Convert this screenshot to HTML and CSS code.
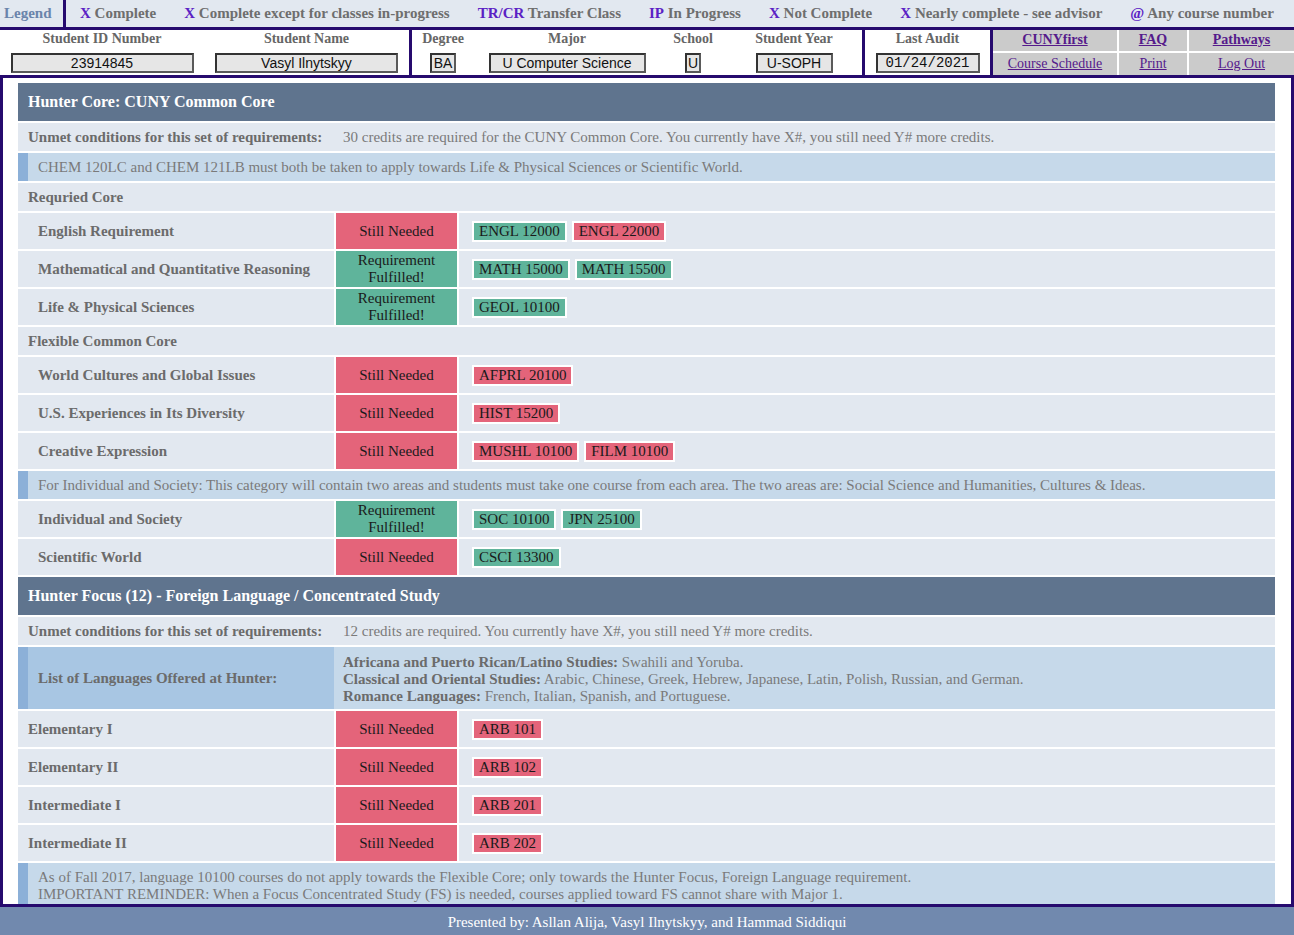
FILE: index.html
```html
<!DOCTYPE html>
<html lang="en">
<head>
<meta charset="utf-8">
<title>Degree Audit</title>
<link rel="stylesheet" href="styles.css">
</head>
<body>
<div class="legend">
  <div class="legend-title">Legend</div>
  <div class="legend-items">
    <span><b class="k">X</b> Complete</span>
    <span><b class="k">X</b> Complete except for classes in-progress</span>
    <span><b class="k">TR/CR</b> Transfer Class</span>
    <span><b class="k">IP</b> In Progress</span>
    <span><b class="k">X</b> Not Complete</span>
    <span><b class="k">X</b> Nearly complete - see advisor</span>
    <span><b class="k">@</b> Any course number</span>
  </div>
</div>

<div class="hdr">
  <div class="sec sec1">
    <div class="field f-id"><div class="lbl">Student ID Number</div><div class="box w-id">23914845</div></div>
    <div class="field f-name"><div class="lbl">Student Name</div><div class="box w-id">Vasyl Ilnytskyy</div></div>
  </div>
  <div class="sec sec2">
    <div class="field f-deg"><div class="lbl">Degree</div><div class="box w-deg">BA</div></div>
    <div class="field f-maj"><div class="lbl">Major</div><div class="box w-maj">U Computer Science</div></div>
    <div class="field f-sch"><div class="lbl">School</div><div class="box w-sch">U</div></div>
    <div class="field f-yr"><div class="lbl">Student Year</div><div class="box w-yr">U-SOPH</div></div>
  </div>
  <div class="sec sec3">
    <div class="field f-aud"><div class="lbl">Last Audit</div><div class="box mono w-aud">01/24/2021</div></div>
  </div>
  <div class="links">
    <a href="#" class="strong">CUNYfirst</a>
    <a href="#" class="strong">FAQ</a>
    <a href="#" class="strong">Pathways</a>
    <a href="#">Course Schedule</a>
    <a href="#">Print</a>
    <a href="#">Log Out</a>
  </div>
</div>

<main class="main">
  <div class="tbl">
    <div class="sechead">Hunter Core: CUNY Common Core</div>
    <div class="unmet"><div class="ulbl">Unmet conditions for this set of requirements:</div><div class="uval">30 credits are required for the CUNY Common Core. You currently have X#, you still need Y# more credits.</div></div>
    <div class="note">CHEM 120LC and CHEM 121LB must both be taken to apply towards Life &amp; Physical Sciences or Scientific World.</div>
    <div class="sub">Requried Core</div>
    <div class="req"><div class="rl ind">English Requirement</div><div class="st bad">Still Needed</div><div class="cs"><span class="c ok">ENGL 12000</span><span class="c bad">ENGL 22000</span></div></div>
    <div class="req"><div class="rl ind">Mathematical and Quantitative Reasoning</div><div class="st ok">Requirement<br>Fulfilled!</div><div class="cs"><span class="c ok">MATH 15000</span><span class="c ok">MATH 15500</span></div></div>
    <div class="req"><div class="rl ind">Life &amp; Physical Sciences</div><div class="st ok">Requirement<br>Fulfilled!</div><div class="cs"><span class="c ok">GEOL 10100</span></div></div>
    <div class="sub">Flexible Common Core</div>
    <div class="req"><div class="rl ind">World Cultures and Global Issues</div><div class="st bad">Still Needed</div><div class="cs"><span class="c bad">AFPRL 20100</span></div></div>
    <div class="req"><div class="rl ind">U.S. Experiences in Its Diversity</div><div class="st bad">Still Needed</div><div class="cs"><span class="c bad">HIST 15200</span></div></div>
    <div class="req"><div class="rl ind">Creative Expression</div><div class="st bad">Still Needed</div><div class="cs"><span class="c bad">MUSHL 10100</span><span class="c bad">FILM 10100</span></div></div>
    <div class="note">For Individual and Society: This category will contain two areas and students must take one course from each area. The two areas are: Social Science and Humanities, Cultures &amp; Ideas.</div>
    <div class="req"><div class="rl ind">Individual and Society</div><div class="st ok">Requirement<br>Fulfilled!</div><div class="cs"><span class="c ok">SOC 10100</span><span class="c ok">JPN 25100</span></div></div>
    <div class="req"><div class="rl ind">Scientific World</div><div class="st bad">Still Needed</div><div class="cs"><span class="c ok">CSCI 13300</span></div></div>

    <div class="sechead">Hunter Focus (12) - Foreign Language / Concentrated Study</div>
    <div class="unmet"><div class="ulbl">Unmet conditions for this set of requirements:</div><div class="uval">12 credits are required. You currently have X#, you still need Y# more credits.</div></div>
    <div class="lang">
      <div class="lang-l">List of Languages Offered at Hunter:</div>
      <div class="lang-r">
        <div><b>Africana and Puerto Rican/Latino Studies:</b> Swahili and Yoruba.</div>
        <div><b>Classical and Oriental Studies:</b> Arabic, Chinese, Greek, Hebrew, Japanese, Latin, Polish, Russian, and German.</div>
        <div><b>Romance Languages:</b> French, Italian, Spanish, and Portuguese.</div>
      </div>
    </div>
    <div class="req"><div class="rl">Elementary I</div><div class="st bad">Still Needed</div><div class="cs"><span class="c bad">ARB 101</span></div></div>
    <div class="req"><div class="rl">Elementary II</div><div class="st bad">Still Needed</div><div class="cs"><span class="c bad">ARB 102</span></div></div>
    <div class="req"><div class="rl">Intermediate I</div><div class="st bad">Still Needed</div><div class="cs"><span class="c bad">ARB 201</span></div></div>
    <div class="req"><div class="rl">Intermediate II</div><div class="st bad">Still Needed</div><div class="cs"><span class="c bad">ARB 202</span></div></div>
    <div class="note">As of Fall 2017, language 10100 courses do not apply towards the Flexible Core; only towards the Hunter Focus, Foreign Language requirement.<br>IMPORTANT REMINDER: When a Focus Concentrated Study (FS) is needed, courses applied toward FS cannot share with Major 1.</div>
  </div>
</main>

<footer class="footer">Presented by: Asllan Alija, Vasyl Ilnytskyy, and Hammad Siddiqui</footer>
</body>
</html>
```

FILE: styles.css
```css
html, body {
  margin: 0;
  padding: 0;
}
body {
  width: 1294px;
  height: 935px;
  overflow: hidden;
  font-family: "Liberation Serif", "Times New Roman", serif;
  font-size: 15px;
  background: #fff;
}

/* Legend bar */
.legend {
  display: flex;
  height: 27px;
  line-height: 27px;
  background: #e2e8f0;
  border-bottom: 3px solid #260a6e;
  font-weight: bold;
  white-space: nowrap;
}
.legend-title {
  width: 59px;
  padding-left: 4px;
  border-right: 3px solid #260a6e;
  color: #6a84ab;
}
.legend-items {
  display: flex;
  gap: 28px;
  padding-left: 14px;
  color: #6e6e6e;
}
.k {
  color: #5b21c4;
}

/* Header */
.hdr {
  display: flex;
  height: 45px;
}
.sec {
  display: flex;
  flex: none;
  border-right: 3px solid #260a6e;
}
.sec1 { width: 409px; }
.sec2 { width: 450px; }
.sec3 { width: 125px; }
.field {
  display: flex;
  flex-direction: column;
  align-items: center;
  flex: none;
}
.f-id { width: 204px; }
.f-name { width: 205px; }
.f-deg { width: 62px; }
.f-maj { width: 186px; }
.f-sch { width: 66px; }
.f-yr { width: 136px; }
.f-aud { width: 125px; }
.lbl {
  font-weight: bold;
  font-size: 14px;
  color: #666;
  line-height: 18px;
  white-space: nowrap;
}
.box {
  margin-top: 5px;
  height: 20px;
  box-sizing: border-box;
  border: 2px solid;
  border-color: #333 #5a5a5a #5a5a5a #333;
  background: #e6e6e6;
  font-family: "Liberation Sans", Arial, sans-serif;
  font-size: 14px;
  line-height: 16px;
  text-align: center;
  color: #111;
  white-space: nowrap;
  overflow: visible;
}
.mono {
  font-family: "Liberation Mono", "DejaVu Sans Mono", monospace;
  font-size: 14px;
}
.w-id { width: 183px; }
.w-deg { width: 26px; }
.w-maj { width: 157px; }
.w-sch { width: 16px; }
.w-yr { width: 77px; }
.w-aud { width: 104px; }

.links {
  flex: 1;
  display: grid;
  grid-template-columns: 124px 68px 105px;
  grid-template-rows: 21px 22px;
  gap: 2px;
  background: #fff;
}
.links a {
  background: #cbcbcb;
  color: #551a8b;
  font-size: 14px;
  text-decoration: underline;
  display: flex;
  align-items: center;
  justify-content: center;
  white-space: nowrap;
  padding-bottom: 1px;
}
.links a.strong {
  font-weight: bold;
}

/* Main area */
.main {
  display: block;
  height: 832px;
  box-sizing: border-box;
  border: 3px solid #260a6e;
  padding: 5px 16px 0 15px;
  overflow: hidden;
}
.tbl {
  display: flex;
  flex-direction: column;
  gap: 2px;
}
.sechead {
  height: 38px;
  line-height: 38px;
  background: #5f748e;
  color: #fff;
  font-weight: bold;
  font-size: 16px;
  padding-left: 10px;
}
.unmet {
  display: grid;
  grid-template-columns: 316px 1fr;
  height: 28px;
  line-height: 28px;
  background: #e2e8f0;
  white-space: nowrap;
}
.ulbl {
  font-weight: bold;
  color: #6b6b6b;
  padding-left: 10px;
}
.uval {
  color: #7a7a7a;
  padding-left: 9px;
}
.note {
  background: #c6d9ea;
  border-left: 10px solid #8cb0d8;
  padding: 6px 10px 5px 10px;
  line-height: 17px;
  color: #7a7a7a;
}
.sub {
  height: 28px;
  line-height: 28px;
  background: #e2e8f0;
  padding-left: 10px;
  font-weight: bold;
  color: #6b6b6b;
}
.req {
  display: grid;
  grid-template-columns: 316px 121px 1fr;
  gap: 2px;
  height: 36px;
}
.rl {
  background: #e2e8f0;
  display: flex;
  align-items: center;
  padding-left: 10px;
  font-weight: bold;
  color: #6b6b6b;
}
.rl.ind {
  padding-left: 20px;
}
.st {
  display: flex;
  align-items: center;
  justify-content: center;
  text-align: center;
  line-height: 17px;
  color: #1a1a1a;
}
.st.bad { background: #e4647a; }
.st.ok { background: #5fb49b; }
.cs {
  background: #e2e8f0;
  display: flex;
  align-items: center;
  gap: 5px;
  padding-left: 13px;
}
.c {
  border: 2px solid #fff;
  padding: 0 5px;
  line-height: 17px;
  color: #1a1a1a;
  white-space: nowrap;
}
.c.ok { background: #5fb49b; }
.c.bad { background: #e4647a; }

.lang {
  display: grid;
  grid-template-columns: 316px 1fr;
  height: 62px;
}
.lang-l {
  background: #a8c6e3;
  border-left: 10px solid #8cb0d8;
  padding-left: 10px;
  display: flex;
  align-items: center;
  font-weight: bold;
  color: #6b6b6b;
}
.lang-r {
  background: #c6d9ea;
  padding: 7px 0 4px 9px;
  line-height: 17px;
  color: #7a7a7a;
}
.lang-r b {
  color: #6b6b6b;
}

.footer {
  height: 28px;
  line-height: 30px;
  background: #7189ae;
  color: #fff;
  text-align: center;
}
```
